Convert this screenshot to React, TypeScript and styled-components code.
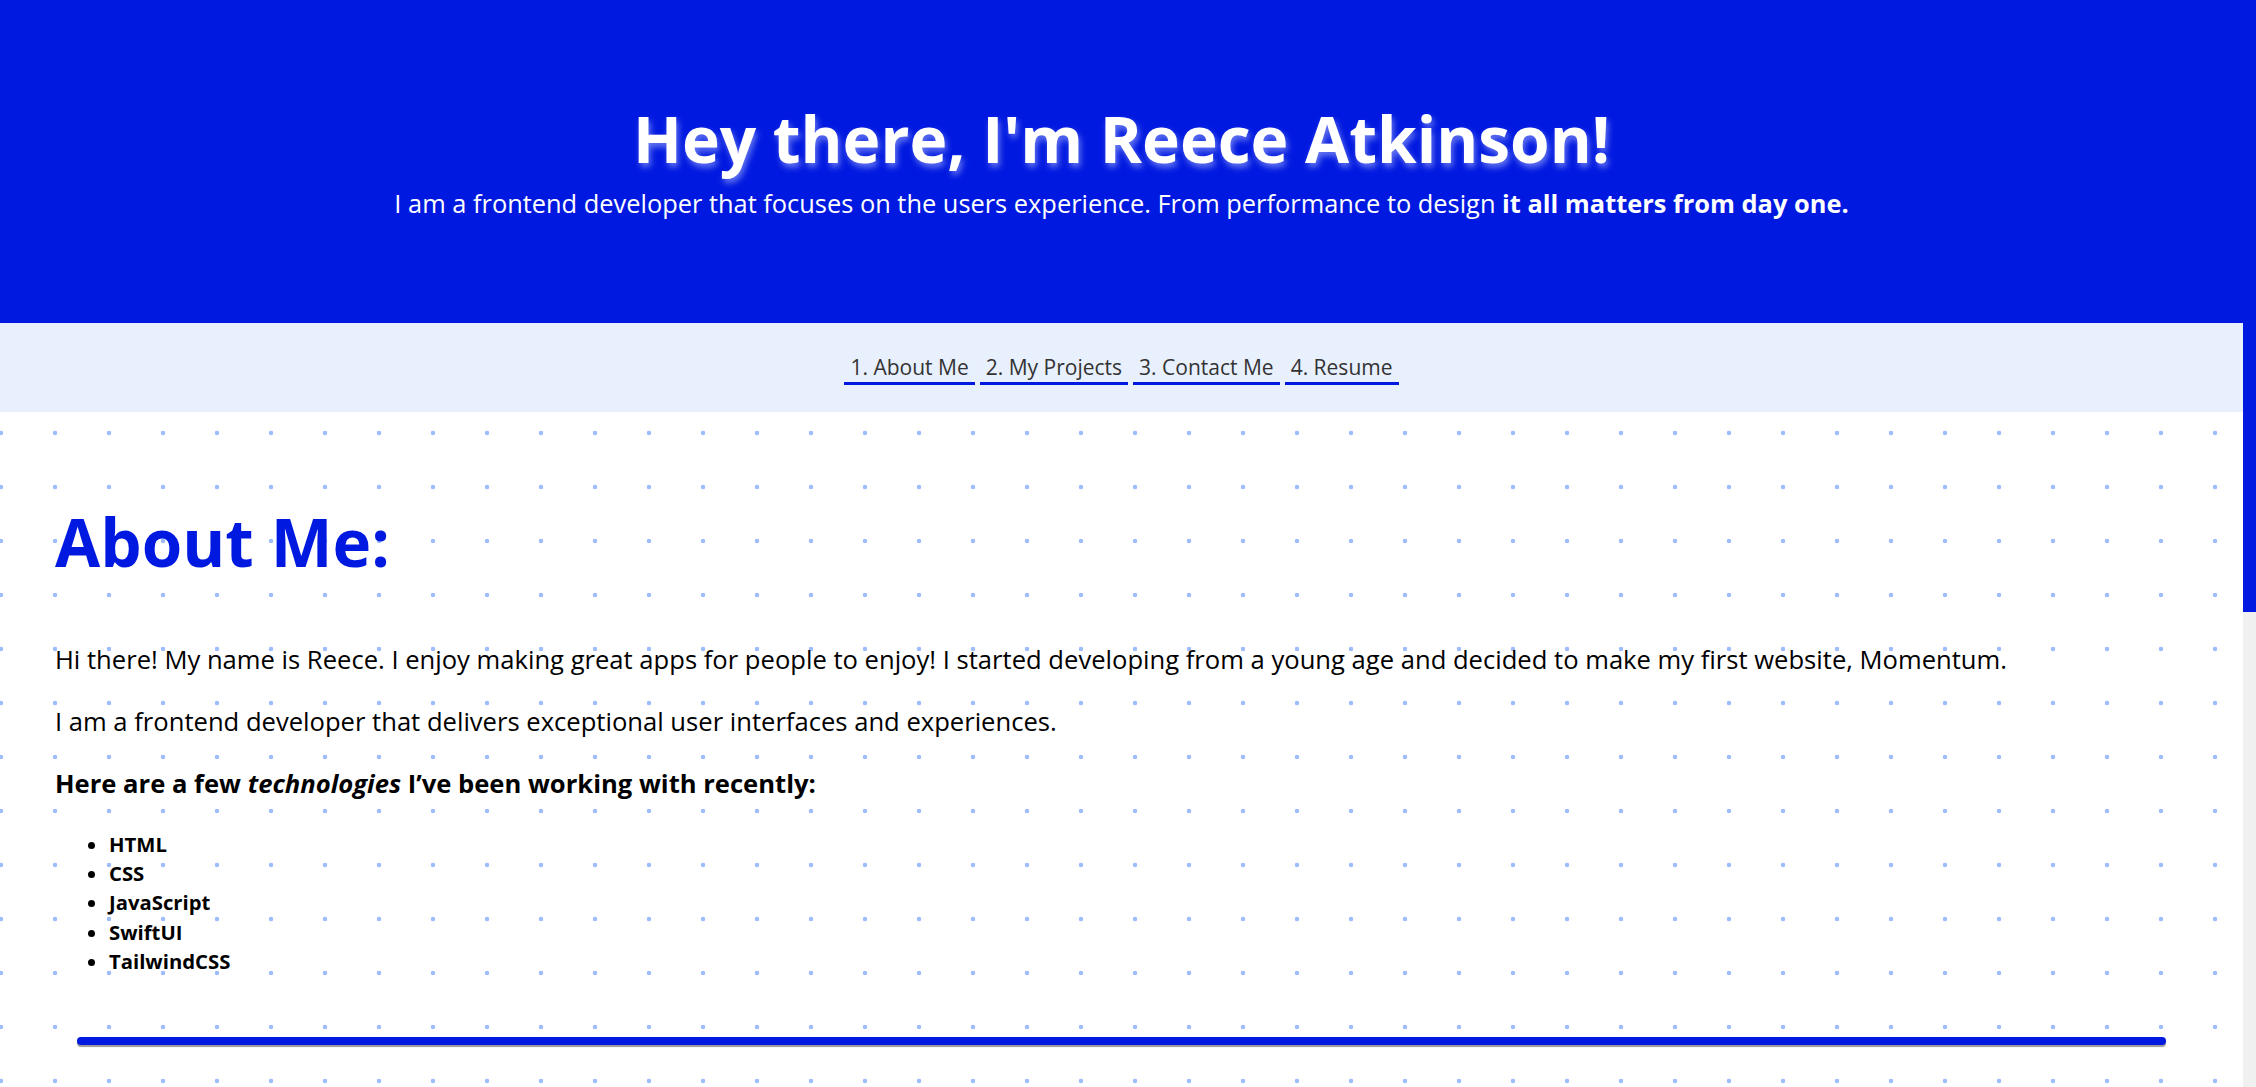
import React from "react";
import styled, { createGlobalStyle } from "styled-components";

const BLUE = "#0019e0";
const FONT = `"Open Sans", "Noto Sans", sans-serif`;

const Global = createGlobalStyle`
  html, body { margin: 0; padding: 0; }
  body {
    font-family: ${FONT};
    background: #ffffff;
    color: #000;
  }
  ::-webkit-scrollbar { width: 0; }
`;

const Page = styled.div`
  margin-right: 13px;
`;

const ScrollTrack = styled.div`
  position: fixed;
  top: 0;
  right: 0;
  width: 13px;
  height: 100vh;
  background: #f0f0f0;
  z-index: 10;
`;

const ScrollThumb = styled.div`
  width: 100%;
  height: 612px;
  background: ${BLUE};
`;

const Header = styled.header`
  height: 323px;
  box-sizing: border-box;
  padding-top: 101px;
  background: ${BLUE};
  color: #fff;
  text-align: center;
`;

const Title = styled.h1`
  margin: 0;
  font-size: 64px;
  line-height: 1.2;
  font-weight: 700;
  text-shadow: 2px 4px 6px rgba(190, 200, 255, 0.55);
`;

const Subtitle = styled.p`
  margin: 10px 0 0;
  font-size: 25.4px;
  line-height: 1.2;
  font-weight: 400;
  strong { font-weight: 700; }
`;

const Nav = styled.nav`
  height: 89px;
  box-sizing: border-box;
  padding-top: 5px;
  background: #e8f0fe;
  display: flex;
  justify-content: center;
  align-items: center;
  gap: 5px;
`;

const NavLink = styled.a`
  display: inline-block;
  padding: 0 6px 1px;
  font-size: 21px;
  line-height: 1.2;
  color: #333;
  text-decoration: none;
  border-bottom: 3px solid ${BLUE};
`;

const Main = styled.main`
  min-height: 1518px;
  padding: 91px 55px 0;
  box-sizing: border-box;
  background-color: #fff;
  background-image: radial-gradient(circle, #9fbcfb 0, #9fbcfb 2px, transparent 2.6px);
  background-size: 54px 54px;
  background-position: -26px -6px;
`;

const Heading = styled.h2`
  margin: 0;
  font-size: 65.5px;
  line-height: 1.2;
  font-weight: 700;
  color: ${BLUE};
`;

const Paragraph = styled.p<{ $bold?: boolean }>`
  margin: 0 0 24px;
  font-size: 25.6px;
  line-height: 38.4px;
  font-weight: ${(p) => (p.$bold ? 700 : 400)};
`;

const Body = styled.div`
  margin-top: 59px;
`;

const TechList = styled.ul`
  margin: 26px 0 0;
  padding-left: 54px;
  list-style: disc;
`;

const TechItem = styled.li`
  font-size: 20.3px;
  line-height: 29.3px;
  font-weight: 700;
`;

const Divider = styled.hr`
  margin: 61px 22px 0;
  height: 8px;
  border: none;
  border-radius: 4px;
  background: ${BLUE};
  box-shadow: 0 2px 1px rgba(0, 0, 0, 0.4);
`;

const techs = ["HTML", "CSS", "JavaScript", "SwiftUI", "TailwindCSS"];
const links = ["1. About Me", "2. My Projects", "3. Contact Me", "4. Resume"];

export default function App() {
  return (
    <>
      <Global />
      <Page>
        <Header>
          <Title>Hey there, I'm Reece Atkinson!</Title>
          <Subtitle>
            I am a frontend developer that focuses on the users experience. From performance to design{" "}
            <strong>it all matters from day one.</strong>
          </Subtitle>
        </Header>
        <Nav>
          {links.map((l) => (
            <NavLink key={l} href="#">
              {l}
            </NavLink>
          ))}
        </Nav>
        <Main>
          <Heading>About Me:</Heading>
          <Body>
            <Paragraph>
              Hi there! My name is Reece. I enjoy making great apps for people to enjoy! I started developing from a
              young age and decided to make my first website, Momentum.
            </Paragraph>
            <Paragraph>I am a frontend developer that delivers exceptional user interfaces and experiences.</Paragraph>
            <Paragraph $bold>
              Here are a few <em>technologies</em> I’ve been working with recently:
            </Paragraph>
            <TechList>
              {techs.map((t) => (
                <TechItem key={t}>{t}</TechItem>
              ))}
            </TechList>
          </Body>
          <Divider />
        </Main>
      </Page>
      <ScrollTrack>
        <ScrollThumb />
      </ScrollTrack>
    </>
  );
}
